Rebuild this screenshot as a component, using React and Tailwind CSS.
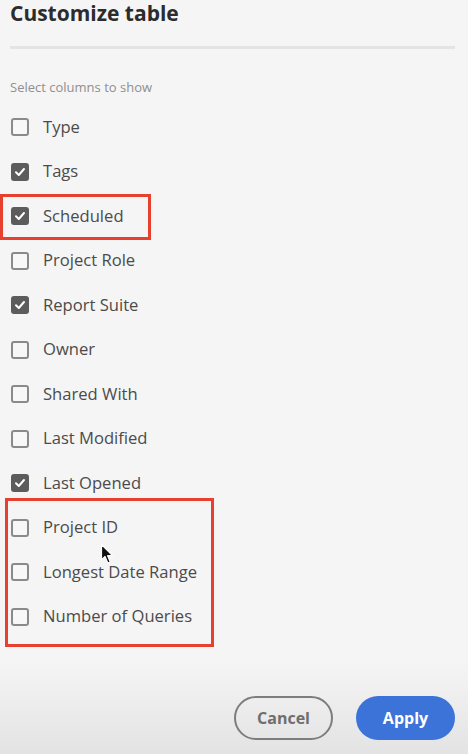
import React from "react";

const columns = [
  { label: "Type", checked: false },
  { label: "Tags", checked: true },
  { label: "Scheduled", checked: true, mark: "single" },
  { label: "Project Role", checked: false },
  { label: "Report Suite", checked: true },
  { label: "Owner", checked: false },
  { label: "Shared With", checked: false },
  { label: "Last Modified", checked: false },
  { label: "Last Opened", checked: true },
  { label: "Project ID", checked: false, cursor: true },
  { label: "Longest Date Range", checked: false },
  { label: "Number of Queries", checked: false },
];

function Checkbox({ checked }) {
  if (checked) {
    return (
      <span className="w-[18px] h-[18px] rounded-[3px] bg-[#5c5c5c] flex items-center justify-center shrink-0">
        <svg width="12" height="12" viewBox="0 0 12 12">
          <path d="M2 6.3 L4.8 9 L10 3" fill="none" stroke="#fff" strokeWidth="2" strokeLinecap="round" strokeLinejoin="round" />
        </svg>
      </span>
    );
  }
  return <span className="w-[18px] h-[18px] rounded-[3px] border-2 border-[#8a8a8a] bg-[#f7f7f7] shrink-0" />;
}

function Cursor() {
  return (
    <svg className="absolute left-[100px] top-[37px]" width="16" height="22" viewBox="0 0 16 22">
      <path d="M1.5 1.5 L1.5 17 L5 13.5 L7.8 20 L10.3 19 L7.6 12.7 L12.5 12.7 Z" fill="#111" stroke="#fff" strokeWidth="1.2" strokeLinejoin="round" />
    </svg>
  );
}

export default function App() {
  const top = columns.slice(0, 9);
  const bottom = columns.slice(9);

  const row = (c) => (
    <div key={c.label} className="relative h-[44.5px] flex items-center pl-[11px] gap-[14px]">
      <Checkbox checked={c.checked} />
      <span className="text-[16.6px] text-[#4b4b4b]">{c.label}</span>
      {c.mark === "single" && (
        <span className="absolute left-0 top-[0px] w-[151px] h-[46px] border-[3px] border-[#e8402f]" />
      )}
      {c.cursor && <Cursor />}
    </div>
  );

  return (
    <div className="w-[468px] h-[754px] bg-[#f5f5f5] flex flex-col overflow-hidden" style={{ fontFamily: '"Open Sans", "Noto Sans", sans-serif' }}>
      {/* Header */}
      <div className="h-[45px] px-[10px]">
        <h1 className="text-[21px] font-bold text-[#2c2c2c] leading-[26px]">Customize table</h1>
      </div>
      <div className="h-[3px] mx-[10px] mr-[13px] mt-[1px] bg-[#e4e4e4]" />

      {/* Body */}
      <p className="pt-[29px] px-[10px] text-[13px] leading-[18px] text-[#8f8f8f]">Select columns to show</p>
      <div className="mt-[9px] flex flex-col">
        {top.map(row)}
        <div className="relative">
          {bottom.map(row)}
          <span className="absolute left-[5px] -top-[8px] w-[209px] h-[149px] border-[3px] border-[#e8402f] pointer-events-none" />
        </div>
      </div>

      {/* Footer */}
      <div className="flex-1 bg-gradient-to-b from-[#f5f5f5] from-20% to-[#e3e3e3] flex items-end justify-end gap-[23px] pr-[13px] pb-[14px]">
        <button className="w-[99px] h-[44px] rounded-full border-2 border-[#7d7d7d] text-[16px] font-bold text-[#6e6e6e]">Cancel</button>
        <button className="w-[99px] h-[44px] rounded-full bg-[#3b73d9] text-[16px] font-bold text-white">Apply</button>
      </div>
    </div>
  );
}
